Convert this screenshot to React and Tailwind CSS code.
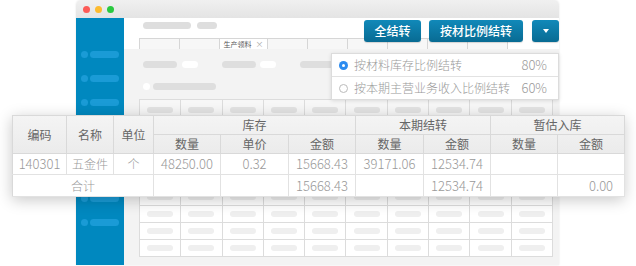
import React from 'react';

const sideItems = [0, 1, 2, 3, 4, 5, 6, 7];
const gridCols = Array.from({ length: 10 });
const gridRows = Array.from({ length: 8 });

function Pill({ className }) {
  return <div className={`rounded-full ${className}`}></div>;
}

// Background window: title bar, blue sidebar and a placeholder grid
function Window() {
  return (
    <div className="ml-[76px] w-[483px] h-[265px] flex flex-col rounded-t-[5px] overflow-hidden shadow-[0_0_2px_rgba(0,0,0,0.12)]">
      <div className="h-[18px] shrink-0 flex items-center gap-[5px] pl-[7px] bg-gradient-to-b from-[#f0f0f0] to-[#e4e4e4]">
        <span className="w-[7px] h-[7px] rounded-full bg-[#fc5b57]"></span>
        <span className="w-[7px] h-[7px] rounded-full bg-[#fdbb2f]"></span>
        <span className="w-[7px] h-[7px] rounded-full bg-[#2ac940]"></span>
      </div>
      <div className="flex flex-1">
        <div className="w-[48px] shrink-0 bg-[#0088bf] flex flex-col gap-[17px] pt-[33px] pl-[5px]">
          {sideItems.map((i) => (
            <div key={i} className="flex items-center gap-[2px] h-[7px]">
              <span className="w-[7px] h-[7px] rounded-full bg-[#1a9bd6]"></span>
              <span className="w-[29px] h-[7px] rounded-full bg-[#1a9bd6]"></span>
            </div>
          ))}
        </div>
        <div className="flex-1 flex flex-col bg-[#f3f3f3]">
          <div className="bg-white h-[31px] pl-[15px] flex flex-col">
            <div className="flex gap-[6px] pl-[4px] pt-[4px]">
              <Pill className="w-[48px] h-[7px] bg-[#dedede]" />
              <Pill className="w-[20px] h-[7px] bg-[#dedede]" />
            </div>
            <div className="flex mt-auto h-[11px]">
              {[41, 41, 0, 41, 41, 41, 41, 41, 41].map((w, i) =>
                w === 0 ? (
                  <div key={i} className="w-[49px] bg-white border border-b-0 border-[#d6d6d6] -ml-px flex items-center justify-center gap-[4px] text-[7px] leading-none text-[#555]">
                    <span>生产领料</span>
                    <span className="text-[#aaa] text-[8px]">×</span>
                  </div>
                ) : (
                  <div key={i} className="w-[41px] bg-[#f7f7f7] border border-b-0 border-[#d6d6d6] -ml-px first:ml-0"></div>
                )
              )}
            </div>
          </div>
          <div className="pl-[19px] pt-[12px] flex items-center h-[7px] box-content">
            <Pill className="w-[34px] h-[7px] bg-[#dedede]" />
            <Pill className="ml-[5px] w-[16px] h-[7px] bg-white" />
            <Pill className="ml-[24px] w-[34px] h-[7px] bg-[#dedede]" />
            <Pill className="ml-[4px] w-[16px] h-[7px] bg-white" />
            <Pill className="ml-[24px] w-[34px] h-[7px] bg-[#dedede]" />
          </div>
          <div className="pl-[19px] pt-[15px] flex items-center gap-[3px]">
            <span className="w-[7px] h-[7px] rounded-full bg-white"></span>
            <Pill className="w-[63px] h-[7px] bg-[#dedede]" />
          </div>
          <div className="ml-[15px] mt-[9px] w-[414px] border-t border-l border-[#dcdcdc]">
            <div className="flex h-[21px]">
              {gridCols.map((_, c) => (
                <div key={c} className="flex-1 border-r border-b border-[#dcdcdc] bg-[#f7f7f7] flex items-center justify-center">
                  <Pill className="w-[26px] h-[6px] bg-[#e3e3e3]" />
                </div>
              ))}
            </div>
            {gridRows.map((_, r) => (
              <div key={r} className="flex h-[17px]">
                {gridCols.map((_, c) => (
                  <div key={c} className="flex-1 border-r border-b border-[#dcdcdc] bg-white flex items-center justify-center">
                    <Pill className="w-[26px] h-[6px] bg-[#efefef]" />
                  </div>
                ))}
              </div>
            ))}
          </div>
        </div>
      </div>
    </div>
  );
}

const btn = 'h-[22px] rounded-[3px] bg-gradient-to-b from-[#1189b9] to-[#086b93] text-white text-[12px] font-medium flex items-center justify-center shadow-[0_1px_1px_rgba(0,0,0,0.15)]';

const th = 'border-r border-b border-[#d9d9d9] font-normal text-[#666] text-[12px] text-center';
const td = 'border-r border-b border-[#e2e2e2] text-[#999] text-[12px] text-center font-light whitespace-nowrap';
const num = 'border-r border-b border-[#e2e2e2] text-[#999] text-[13px] text-center font-light whitespace-nowrap';

export default function App() {
  return (
    <div className="relative w-[636px] h-[266px] bg-white overflow-hidden" style={{ fontFamily: '"Noto Sans CJK SC", "Liberation Sans", sans-serif' }}>
      <Window />

      {/* action buttons */}
      <div className="absolute left-[364px] top-[20px] flex gap-[8px]">
        <div className={`${btn} w-[57px]`}>全结转</div>
        <div className={`${btn} w-[94px]`}>按材比例结转</div>
        <div className={`${btn} w-[27px] ml-px`}>
          <span className="w-0 h-0 border-l-[3.5px] border-r-[3.5px] border-t-[4px] border-l-transparent border-r-transparent border-t-white"></span>
        </div>
      </div>

      {/* dropdown menu */}
      <div className="absolute left-[331px] top-[53px] w-[228px] bg-white border border-[#dcdcdc] shadow-[0_1px_4px_rgba(0,0,0,0.12)] text-[12px] font-light text-[#999] whitespace-nowrap">
        <div className="h-[23px] flex items-center pl-[7px] pr-[11px] border-b border-[#e2e2e2]">
          <span className="w-[9px] h-[9px] rounded-full bg-[#2d8cf0] flex items-center justify-center">
            <span className="w-[3px] h-[3px] rounded-full bg-white"></span>
          </span>
          <span className="ml-[6px]">按材料库存比例结转</span>
          <span className="ml-auto text-[13px]">80%</span>
        </div>
        <div className="h-[22px] flex items-center pl-[7px] pr-[11px]">
          <span className="w-[9px] h-[9px] rounded-full border border-[#bbb]"></span>
          <span className="ml-[6px]">按本期主营业务收入比例结转</span>
          <span className="ml-auto text-[13px]">60%</span>
        </div>
      </div>

      {/* detail table */}
      <div className="absolute left-[12px] top-[115px] w-[612px] bg-white shadow-[0_3px_14px_rgba(0,0,0,0.22)]">
        <table className="w-full border-collapse table-fixed border-l border-t border-[#d9d9d9]">
          <colgroup>
            <col className="w-[54px]" />
            <col className="w-[47px]" />
            <col className="w-[40px]" />
            <col className="w-[67px]" />
            <col className="w-[68px]" />
            <col className="w-[67px]" />
            <col className="w-[68px]" />
            <col className="w-[67px]" />
            <col className="w-[67px]" />
            <col className="w-[67px]" />
          </colgroup>
          <thead className="bg-gradient-to-b from-[#f4f4f4] to-[#ebebeb]">
            <tr className="h-[19px]">
              <th rowSpan={2} className={th}>编码</th>
              <th rowSpan={2} className={th}>名称</th>
              <th rowSpan={2} className={th}>单位</th>
              <th colSpan={3} className={th}>库存</th>
              <th colSpan={2} className={th}>本期结转</th>
              <th colSpan={2} className={th}>暂估入库</th>
            </tr>
            <tr className="h-[18px]">
              <th className={th}>数量</th>
              <th className={th}>单价</th>
              <th className={th}>金额</th>
              <th className={th}>数量</th>
              <th className={th}>金额</th>
              <th className={th}>数量</th>
              <th className={th}>金额</th>
            </tr>
          </thead>
          <tbody>
            <tr className="h-[21px]">
              <td className={num}>140301</td>
              <td className={td}>五金件</td>
              <td className={td}>个</td>
              <td className={num}>48250.00</td>
              <td className={num}>0.32</td>
              <td className={num}>15668.43</td>
              <td className={num}>39171.06</td>
              <td className={num}>12534.74</td>
              <td className={td}></td>
              <td className={td}></td>
            </tr>
            <tr className="h-[22px]">
              <td colSpan={3} className={td}>合计</td>
              <td className={td}></td>
              <td className={td}></td>
              <td className={num}>15668.43</td>
              <td className={td}></td>
              <td className={num}>12534.74</td>
              <td className={td}></td>
              <td className={`${num} text-right pr-[11px]`}>0.00</td>
            </tr>
          </tbody>
        </table>
      </div>
    </div>
  );
}
